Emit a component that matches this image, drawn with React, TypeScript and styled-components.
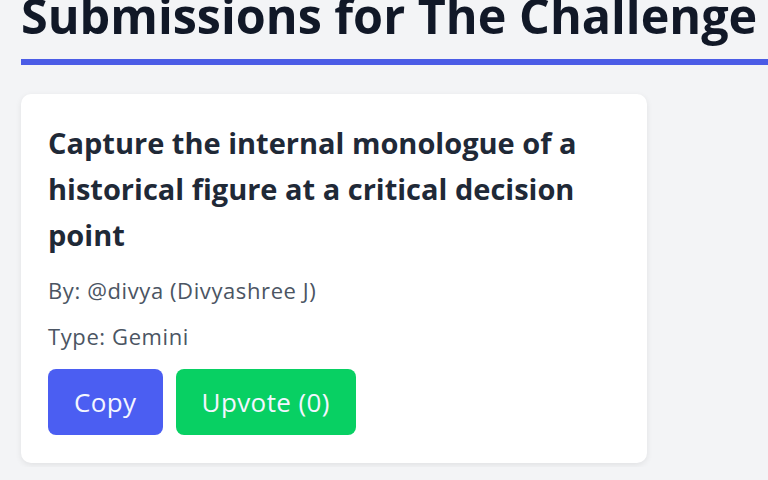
import React, { Component } from 'react';
import styled, { createGlobalStyle } from 'styled-components';

type Submission = {
  prompt: string
  username: string
  name: string
  type: string
  votes: number
}

type AppState = {
  submissions: Submission[]
}

const GlobalStyle = createGlobalStyle`
  html, body {
    margin: 0;
    padding: 0;
    background: #f3f4f6;
    font-family: "Open Sans", "Noto Sans", sans-serif;
    overflow: hidden;
  }
`;

export default class App extends Component<{}, AppState> {

  constructor(props: {}) {
    super(props);
    this.state = {
      submissions: [
        {
          prompt: 'Capture the internal monologue of a historical figure at a critical decision point',
          username: 'divya',
          name: 'Divyashree J',
          type: 'Gemini',
          votes: 0
        }
      ]
    }
  }

  /**
   * Upvote handler: bumps the counter of one submission.
   */
  handleUpvote = (index: number) => {
    const submissions = this.state.submissions.map((s, i) =>
      i === index ? { ...s, votes: s.votes + 1 } : s
    );
    this.setState({ submissions });
  }

  handleCopy = (text: string) => {
    navigator.clipboard?.writeText(text).catch(() => undefined);
  }

  render() {
    return (
      <StyledPage>
        <GlobalStyle />
        <StyledTitle>Submissions for The Challenge</StyledTitle>
        <StyledRule />
        <StyledList>
          {this.state.submissions.map((s, i) => (
            <StyledCard key={i}>
              <StyledPrompt>{s.prompt}</StyledPrompt>
              <StyledMeta>By: @{s.username} ({s.name})</StyledMeta>
              <StyledMeta>Type: {s.type}</StyledMeta>
              <StyledActions>
                <StyledButton $variant="copy" onClick={() => this.handleCopy(s.prompt)}>
                  Copy
                </StyledButton>
                <StyledButton $variant="vote" onClick={() => this.handleUpvote(i)}>
                  Upvote ({s.votes})
                </StyledButton>
              </StyledActions>
            </StyledCard>
          ))}
        </StyledList>
      </StyledPage>
    )
  }
}

const StyledPage = styled.div`
  padding: 0 0 0 21px;
  height: 480px;
  box-sizing: border-box;
`;

const StyledTitle = styled.h1`
  margin: -13px 0 0;
  font-size: 48.5px;
  line-height: 56px;
  font-weight: 700;
  color: #111827;
  white-space: nowrap;
`;

const StyledRule = styled.div`
  height: 6px;
  margin-top: 16px;
  background: #4b5ce6;
`;

const StyledList = styled.div`
  display: grid;
  grid-template-columns: 626px;
  gap: 24px;
  padding-top: 29px;
`;

const StyledCard = styled.div`
  background: #ffffff;
  border-radius: 10px;
  box-shadow: 0 2px 6px rgba(0, 0, 0, 0.08);
  padding: 26px 27px 28px;
`;

const StyledPrompt = styled.h2`
  margin: 0 0 9px;
  font-size: 29px;
  line-height: 46px;
  font-weight: 700;
  color: #1f2937;
`;

const StyledMeta = styled.p`
  margin: 0;
  font-size: 22px;
  line-height: 46px;
  letter-spacing: 0.6px;
  color: #4b5563;
`;

const StyledActions = styled.div`
  display: flex;
  gap: 13px;
  margin-top: 10px;
`;

const StyledButton = styled.button<{ $variant: 'copy' | 'vote' }>`
  height: 66px;
  padding: 0 26px;
  border: none;
  border-radius: 8px;
  font-family: "Open Sans", "Noto Sans", sans-serif;
  font-size: 26px;
  letter-spacing: 0.4px;
  color: #f4f6ff;
  cursor: pointer;
  background: ${p => (p.$variant === 'copy' ? '#4b5ef2' : '#08d063')};
`;
